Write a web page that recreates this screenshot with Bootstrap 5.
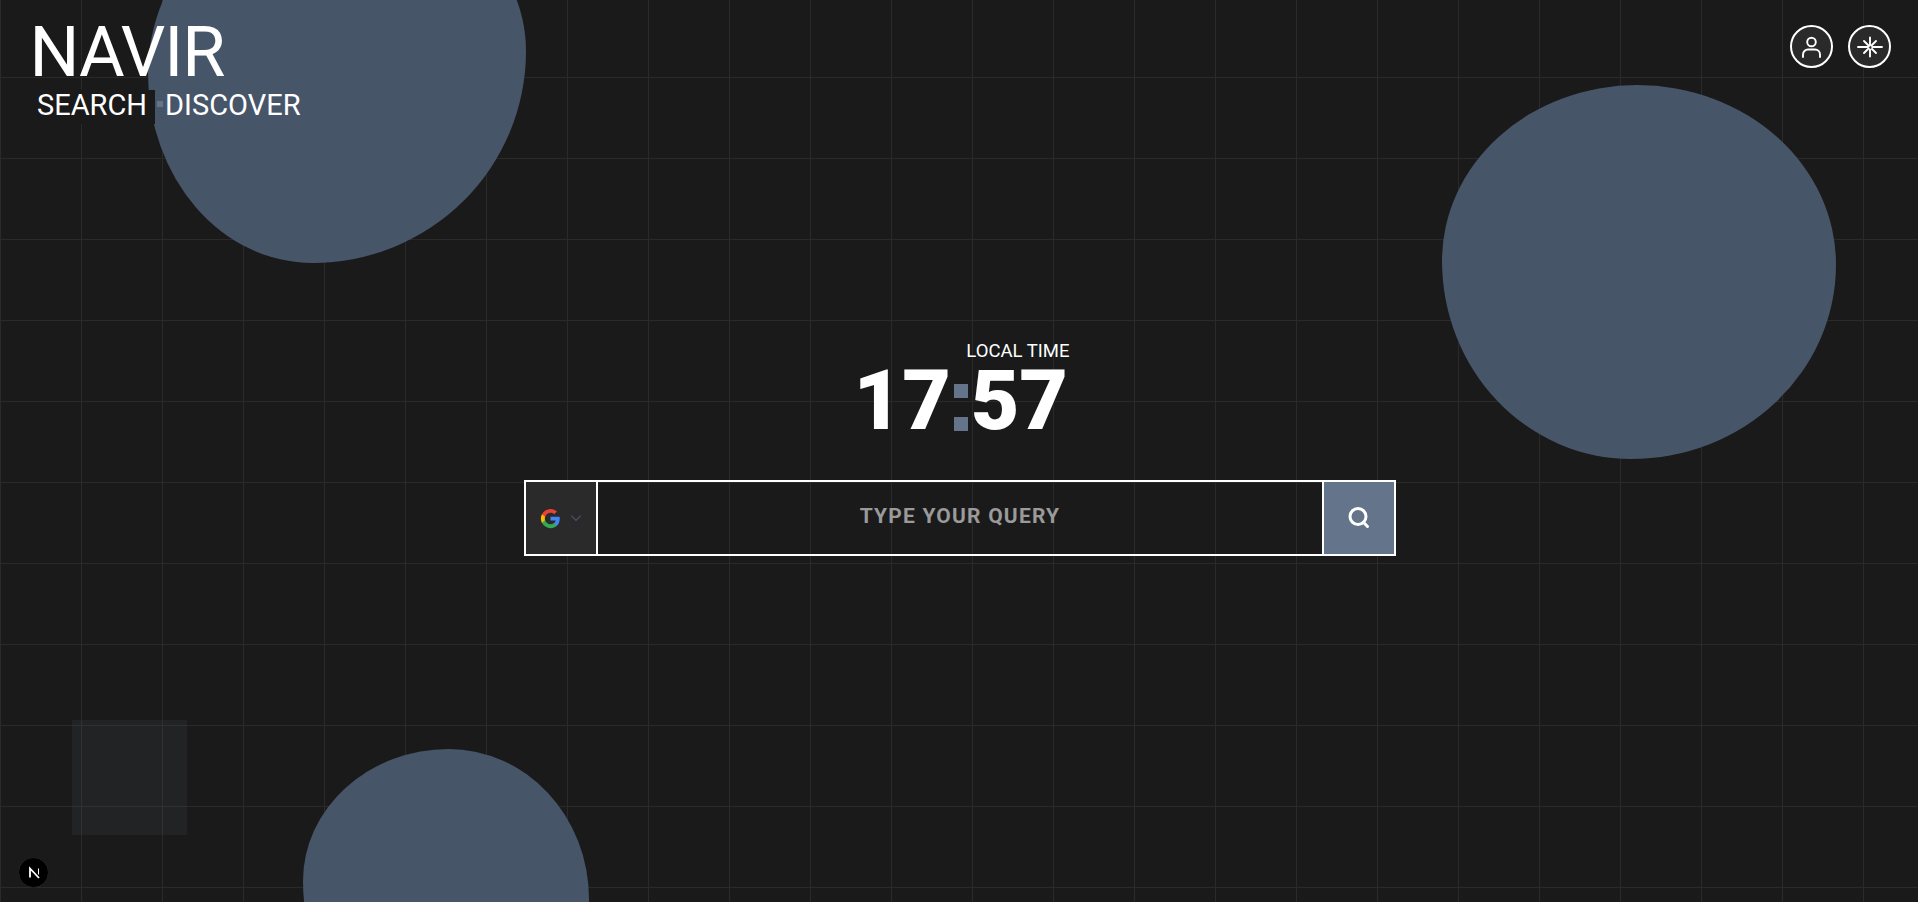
<!DOCTYPE html>
<html lang="en"><head><meta charset="utf-8"><title>Navir</title>
<link href="https://cdn.jsdelivr.net/npm/bootstrap@5.3.0/dist/css/bootstrap.min.css" rel="stylesheet">
<style>
html,body{height:100%;margin:0}
.stage{height:100vh;overflow:hidden;position:relative;background-color:#1a1a1a;background-image:linear-gradient(#2a2a2a 1px,transparent 1px),linear-gradient(90deg,#2a2a2a 1px,transparent 1px);background-size:81px 81px;background-position:0 -4px;color:#fff;font-family:"Roboto",sans-serif}
.blob{position:absolute;background:#475569}
.blob-a{left:148px;top:-115px;width:378px;height:378px;border-radius:50% 50% 56.5% 43.5%/50% 44% 56% 50%}
.blob-b{left:1442px;top:85px;width:394px;height:374px;border-radius:49.5% 50.5% 52% 48%/47% 48% 52% 53%}
.blob-c{left:303px;top:749px;width:286px;height:300px;border-radius:51% 49% 50% 50%/44% 50% 50% 56%}
.tile{position:absolute;left:72px;top:720px;width:115px;height:115px;background:rgba(100,116,139,.1)}
.brand{position:absolute;left:32px;top:14px;line-height:1}
.brand-name{font-size:70px;font-weight:400;line-height:76px;height:76px;letter-spacing:-1px;margin-left:-2.5px}
.brand-sub{font-size:29px;font-weight:400;line-height:30px;display:flex;align-items:flex-start}
.sub-one{background:#1a1a1a;padding:0 8px 4px 5px}
.sub-two{margin-left:2px}
.dot-sep{width:6px;height:6px;background:#64748b;margin:11px 0 0 2px}
.tools{position:absolute;right:27px;top:25px;gap:15px}
.tool-btn{width:43px;height:43px;border-radius:50%;border:2px solid #fff;background:#2a2a2a;padding:0}
.center-col{position:relative;width:872px;margin:0 0 0 524px;padding-top:339px}
.clock-wrap{width:214.5px;margin-left:329.5px}
.clock-label{font-size:18.5px;line-height:24px;text-align:right;font-weight:400;margin-right:-1.5px}
.clock{font-size:84px;font-weight:900;line-height:76px;height:73px;display:flex;justify-content:space-between;align-items:flex-start}
.colon{display:flex;flex-direction:column;gap:19px;width:14px;margin-top:21px}
.colon i{display:block;width:14px;height:14px;background:#64748b}
.search-bar{margin-top:44px;height:76px;border:2px solid #fff}
.engine{width:72px;background:#2a2a2a;border-right:2px solid #fff;gap:8px}
.query{background:transparent;border:0;outline:0;color:#fff;flex:1;min-width:0;text-align:center;font-weight:700;font-size:21px;letter-spacing:1.2px;font-family:"Roboto",sans-serif;padding-bottom:3px}
.query::placeholder{color:#9a9a9a;opacity:1}
.go{width:72px;background:#64748b;border:0;border-left:2px solid #fff}
.next-badge{position:absolute;left:18px;top:857px;width:31px;height:31px;background:#000;border:1px solid #222;border-radius:50%}
</style></head>
<body>
<div class="stage">
<div class="blob blob-a"></div><div class="blob blob-b"></div><div class="blob blob-c"></div><div class="tile"></div>
<div class="brand">
<div class="brand-name">NAVIR</div>
<div class="brand-sub"><span class="sub-one">SEARCH</span><span class="dot-sep"></span><span class="sub-two">DISCOVER</span></div>
</div>
<div class="tools d-flex">
<button class="tool-btn d-flex align-items-center justify-content-center" aria-label="Account"><svg width="24" height="24" viewBox="0 0 24 24" fill="none" stroke="#fff" stroke-width="1.9" stroke-linecap="round"><circle cx="11.5" cy="7" r="4.3"/><path d="M3 22v-2.5a5 5 0 0 1 5-5h7a5 5 0 0 1 5 5V22"/></svg></button>
<button class="tool-btn d-flex align-items-center justify-content-center" aria-label="Theme"><svg width="26" height="26" viewBox="0 0 26 26" fill="none" stroke="#fff" stroke-width="1.9" stroke-linecap="round"><path d="M1 13h24M13 3.5v19M7 7l12 12M19 7L7 19"/><circle cx="13.5" cy="13.5" r="1.8" fill="#2a2a2a" stroke-width="1"/></svg></button>
</div>
<div class="center-col">
<div class="clock-wrap"><div class="clock-label">LOCAL TIME</div><div class="clock"><span>17</span><span class="colon"><i></i><i></i></span><span>57</span></div></div>
<div class="search-bar d-flex">
<div class="engine d-flex align-items-center justify-content-center">
<svg width="21" height="21" viewBox="0 0 24 24"><path fill="#4285F4" d="M22.56 12.25c0-.78-.07-1.53-.2-2.25H12v4.26h5.92c-.26 1.37-1.04 2.53-2.21 3.31v2.77h3.57c2.08-1.92 3.28-4.74 3.28-8.09z"/><path fill="#34A853" d="M12 23c2.97 0 5.46-.98 7.28-2.66l-3.57-2.77c-.98.66-2.23 1.06-3.71 1.06-2.86 0-5.29-1.93-6.16-4.53H2.18v2.84C3.99 20.53 7.7 23 12 23z"/><path fill="#FBBC05" d="M5.84 14.09c-.22-.66-.35-1.36-.35-2.09s.13-1.43.35-2.09V7.07H2.18C1.43 8.55 1 10.22 1 12s.43 3.45 1.18 4.93l3.66-2.84z"/><path fill="#EA4335" d="M12 5.38c1.62 0 3.06.56 4.21 1.64l3.15-3.15C17.45 2.09 14.97 1 12 1 7.7 1 3.99 3.47 2.18 7.07l3.66 2.84c.87-2.6 3.3-4.53 6.16-4.53z"/></svg>
<svg width="14" height="14" viewBox="0 0 12 12" fill="none" stroke="#475569" stroke-width="1.1"><path d="M2 4l4 4 4-4"/></svg>
</div>
<input class="query" placeholder="TYPE YOUR QUERY">
<button class="go d-flex align-items-center justify-content-center" aria-label="Search"><svg width="24" height="24" viewBox="0 0 24 24" fill="none" stroke="#fff" stroke-width="3" stroke-linecap="round"><circle cx="11" cy="10.5" r="8"/><path d="M20.5 20.5l-3.8-4"/></svg></button>
</div>
</div>
<div class="next-badge d-flex align-items-center justify-content-center"><svg width="16" height="16" viewBox="0 0 16 16" fill="none" stroke="#fff"><path d="M4 12.5v-9l9 9.5" stroke-width="1.8"/><path d="M12.5 3.5v6" stroke-width="1"/></svg></div>
</div>
<script src="https://cdn.jsdelivr.net/npm/bootstrap@5.3.0/dist/js/bootstrap.bundle.min.js"></script>
</body></html>
